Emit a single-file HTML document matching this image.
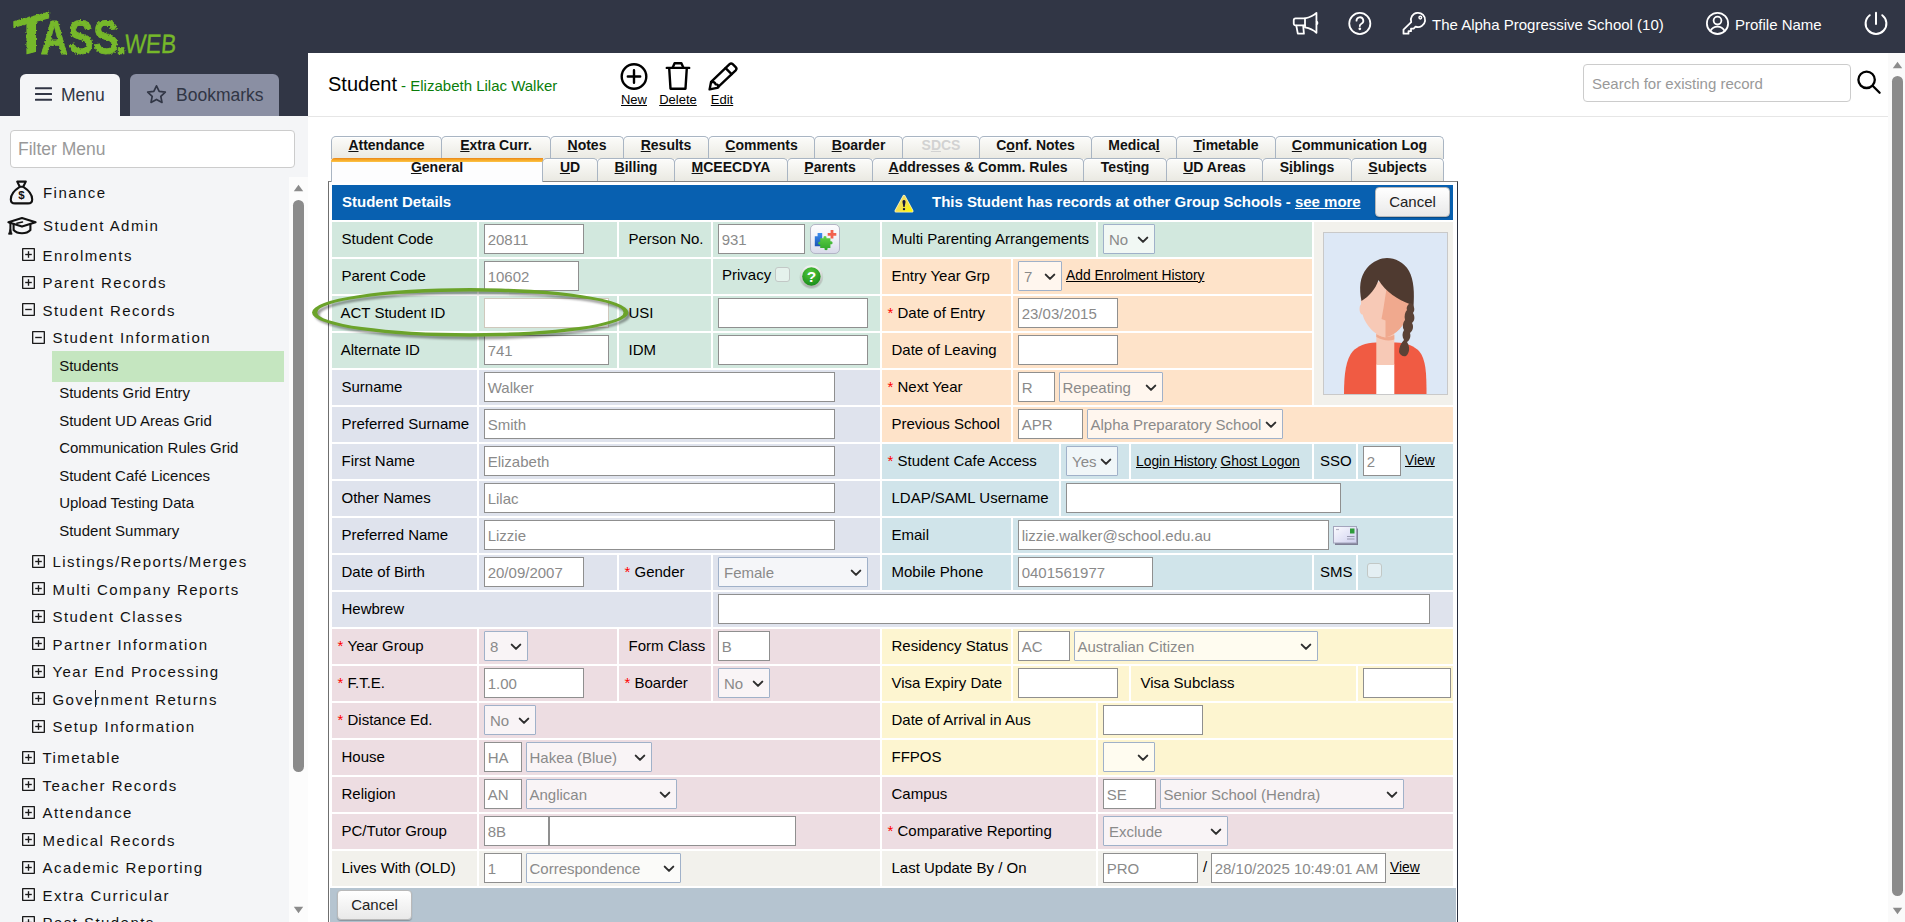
<!DOCTYPE html>
<html lang="en">
<head>
<meta charset="utf-8">
<title>TASS.web - Student</title>
<style>

*{box-sizing:border-box;margin:0;padding:0}
html,body{width:1905px;height:922px;overflow:hidden;background:#fff}
body{font-family:"Liberation Sans",Arial,sans-serif;font-size:15px;color:#000;position:relative}
.abs{position:absolute}
a{color:#000;text-decoration:underline}
/* top chrome */
#topbar{left:0;top:0;width:1905px;height:53px;background:#313645}
#sidehead{left:0;top:0;width:308px;height:116px;background:#313645}
#sidebar{left:0;top:116px;width:308px;height:806px;background:#f4f5f7}
.mtab{top:74px;height:42px;border-radius:6px 6px 0 0;font-size:17.5px;color:#313645}
#tabmenu{left:20px;width:100px;background:#f4f5f7}
#tabbook{left:130px;width:149px;background:#8a8fa3}
.mtab span{position:absolute;top:11px;line-height:20px;white-space:nowrap}
.toptxt{color:#fff;font-size:15px;white-space:nowrap;line-height:20px;top:15px}
#filter{left:10px;top:130px;width:285px;height:38px;background:#fff;border:1px solid #ccc;border-radius:4px;
  font-size:17.5px;color:#999;line-height:37px;padding-left:7px}
#sbtrack{left:289px;top:177px;width:19px;height:745px;background:#fcfcfc}
.thumb{background:#8b8b8b;border-radius:6px}
.mi{position:absolute;white-space:nowrap;line-height:18px;height:18px;font-size:15px;color:#111}
.mg{letter-spacing:1.45px}
#sel{left:52px;top:351px;width:232px;height:31px;background:#c5e6c0}
/* page head */
#ptitle{left:328px;top:71px;font-size:20px;line-height:26px;white-space:nowrap}
#ptitle span{font-size:15px;color:#0a7d0a}
#hr{left:308px;top:116px;width:1580px;height:1px;background:#e6e6e6}
.tb{position:absolute;top:92px;font-size:13px;line-height:16px;text-align:center;text-decoration:underline;white-space:nowrap}
#search{left:1583px;top:64px;width:268px;height:38px;border:1px solid #ccc;border-radius:4px;background:#fff;
  font-size:15px;color:#999;line-height:37px;padding-left:8px}
#vtrack{left:1888px;top:53px;width:17px;height:869px;background:#fafafa}
/* tabs */
.tab{position:absolute;height:23px;border:1px solid #a9b5c3;border-bottom:none;border-radius:5px 5px 0 0;
  background:linear-gradient(#fcfcfa,#eae9e2);font-weight:bold;font-size:14px;line-height:17.5px;text-align:center;white-space:nowrap;color:#111;
  box-shadow:inset 0 1px 0 #fff}
.tab u{text-decoration:underline}
.tab.dis{color:#d2d2d2}
.tab.act{background:#fdfdfe;border-top:none;height:24px;line-height:15.5px;padding-top:2px;box-shadow:none}
.tab.act:before{content:"";position:absolute;left:-1px;right:-1px;top:0;height:4px;border-radius:5px 0 0 0;background:linear-gradient(#e8861d,#f6a623 45%,#fcc44a)}
/* panel */
#panel{left:328px;top:181px;width:1130px;height:741px;border-left:1px solid #6f6f6f;border-top:1px solid #858585;border-right:1px solid #2a3040;background:#fff}
#phead{left:332px;top:185px;width:1121px;height:35px;background:#0860b0;color:#fff;font-weight:bold;font-size:15px;line-height:33px}
#pfoot{left:330px;top:888px;width:1126px;height:34px;background:#b5c4d0}
.btn{position:absolute;height:30px;border:1px solid #b9b9b9;border-radius:4px;background:linear-gradient(#ffffff,#e9e9e9);
  font-size:15px;line-height:28px;text-align:center;color:#222;box-shadow:0 1px 1px rgba(0,0,0,.25)}
.c{position:absolute;height:35px;line-height:35px;white-space:nowrap;font-size:15px}
.c .l{position:absolute;left:9.5px;top:-1.5px}
.c .r{position:absolute;left:5.5px;top:-1.5px}
.c .r i{color:#f00;font-style:normal;display:inline-block;width:10px}
.in{position:absolute;top:2px;height:30px;border:1px solid #8f8f8f;background:#fff;color:#8a8a8a;font-size:15px;line-height:29px;padding-left:2.7px;overflow:hidden;white-space:nowrap}
.se{position:absolute;top:2px;height:30px;border:1px solid #a0b1c9;border-radius:1px;background:rgba(255,255,255,.68);color:#8a8a8a;font-size:15px;line-height:30px;padding-left:5px;overflow:hidden;white-space:nowrap}
.se svg{position:absolute;right:5px;top:11px}
.lk{position:absolute;top:0;font-size:13.85px;text-decoration:underline}
.cb{position:absolute;width:15px;height:15px;border:1px solid #c2c8c6;border-radius:3px;background:rgba(255,255,255,.42)}
.g{background:#d2e8de}.o{background:#fee3c9}.n{background:#dfe3ed}.t{background:#d0e4ea}.p{background:#eddde2}.y{background:#fdf5d0}.b{background:#f2f1ec}

</style>
</head>
<body>
<div id="topbar" class="abs"></div><div id="sidehead" class="abs"></div>
<svg class="abs" style="left:0;top:0" width="190" height="64" viewBox="0 0 190 64"><defs><filter id="rough" x="-5%" y="-10%" width="110%" height="120%"><feTurbulence type="fractalNoise" baseFrequency="0.5" numOctaves="2" seed="7" result="n"/><feDisplacementMap in="SourceGraphic" in2="n" scale="3" xChannelSelector="R" yChannelSelector="G"/></filter></defs><g fill="#76b82a" stroke="#76b82a" stroke-linejoin="round" font-family="'Liberation Sans',Arial,sans-serif" filter="url(#rough)"><text x="13.200" y="53" font-size="52" font-weight="bold" stroke-width="1" textLength="36" lengthAdjust="spacingAndGlyphs" transform="translate(30 0) skewY(-15) translate(-30 0)">T</text><text x="40.500" y="54.200" font-size="49" font-weight="bold" stroke-width=".8" textLength="78" lengthAdjust="spacingAndGlyphs">ASS</text><text x="115.300" y="54" font-size="42" font-weight="bold" stroke-width=".6">.</text></g><text x="124" y="53.300" font-size="26.500" fill="#76b82a" stroke="#76b82a" stroke-width=".35" font-family="'Liberation Sans',Arial,sans-serif" textLength="51.500" lengthAdjust="spacingAndGlyphs" transform="translate(125 53) skewX(-5) translate(-125 -53)">WEB</text></svg>
<div id="tabmenu" class="abs mtab"><span style="left:41px">Menu</span></div>
<svg class="abs" style="left:35px;top:86px" width="17" height="16" viewBox="0 0 17 16" fill="none" ><path d="M0.8 2.2h15.400M0.8 8h15.400M0.8 13.800h15.400" stroke="#313645" stroke-width="2" stroke-linecap="round"/></svg>
<div id="tabbook" class="abs mtab"><span style="left:46px">Bookmarks</span></div>
<svg class="abs" style="left:146px;top:84px" width="21" height="20" viewBox="0 0 21 20" fill="none" ><path d="M10.5 1.800l2.700 5.600 6.100.8-4.500 4.200 1.200 6-5.500-3-5.500 3 1.200-6L1.700 8.200l6.100-.8z" stroke="#313645" stroke-width="1.7" stroke-linejoin="round"/></svg>
<svg class="abs" style="left:1291px;top:10px" width="30" height="28" viewBox="0 0 30 28" fill="none" ><g stroke="#fff" stroke-width="1.800" stroke-linecap="round" stroke-linejoin="round"><path d="M14 8.450H4.600a1.850 1.850 0 0 0-1.850 1.850v3.300a1.850 1.850 0 0 0 1.850 1.850H14"/><path d="M14 8.450c4.600-.9 8.600-2.800 11.450-5.500v19.900c-2.850-2.700-6.850-4.600-11.450-5.400z"/><path d="M5.300 15.600l1.500 8.050h6.100l-.7-8.050"/><path d="M25.600 11.600c1.300.3 1.300 2.300 0 2.600" stroke-width="1.600"/></g></svg><svg class="abs" style="left:1347px;top:10px" width="27" height="27" viewBox="0 0 27 27" fill="none" ><g stroke="#fff" stroke-width="1.800" stroke-linecap="round" stroke-linejoin="round"><circle cx="12.800" cy="13.500" r="10.550"/><path d="M9.500 10.700a3.400 3.400 0 1 1 4.900 3c-1.100.6-1.600 1.200-1.600 2.300"/></g><circle cx="12.800" cy="18.800" r="1.350" fill="#fff"/></svg><svg class="abs" style="left:1400px;top:9px" width="30" height="30" viewBox="0 0 30 30" fill="none" ><g stroke="#fff" stroke-width="1.800" stroke-linecap="round" stroke-linejoin="round"><path d="M11.200 13.200A7.150 7.150 0 1 1 15.600 17.700L13.600 19.700H11V22.200H8.500V24.700H3.500V20.600Z"/><circle cx="20.300" cy="8.600" r="1.300" stroke-width="1.500"/></g></svg><svg class="abs" style="left:1704px;top:10px" width="28" height="28" viewBox="0 0 28 28" fill="none" ><g stroke="#fff" stroke-width="1.800" stroke-linecap="round" stroke-linejoin="round"><circle cx="13.500" cy="13.400" r="10.600"/><circle cx="13.500" cy="10.600" r="3.900"/><path d="M6.300 21c1.600-3 4.200-4.400 7.200-4.400s5.600 1.400 7.200 4.400"/></g></svg><svg class="abs" style="left:1862px;top:9px" width="28" height="28" viewBox="0 0 28 28" fill="none" ><g stroke="#fff" stroke-width="1.800" stroke-linecap="round" stroke-linejoin="round"><path stroke-width="2" d="M14 3.700v11.300"/><path stroke-width="2" d="M7.740 6.200A10.400 10.400 0 1 0 20.260 6.200"/></g></svg>
<div class="abs toptxt" style="left:1432px">The Alpha Progressive School (10)</div>
<div class="abs toptxt" style="left:1735px">Profile Name</div>
<div id="sidebar" class="abs"></div><div id="filter" class="abs">Filter Menu</div><div id="sbtrack" class="abs"></div><svg class="abs" style="left:293px;top:184px" width="11" height="8" viewBox="0 0 11 8"><path d="M0.8 7.2L5.5 0.8l4.7 6.4z" fill="#8b8b8b"/></svg><div class="abs thumb" style="left:293px;top:200px;width:11px;height:572px"></div><svg class="abs" style="left:293px;top:906px" width="11" height="8" viewBox="0 0 11 8"><path d="M0.8 0.8L5.5 7.2l4.7-6.4z" fill="#8b8b8b"/></svg><div id="sel" class="abs"></div><div class="mi mg" style="left:43px;top:183.5px">Finance</div><div class="mi mg" style="left:43px;top:216.5px">Student Admin</div><div class="mi mg" style="left:42.5px;top:246.5px">Enrolments</div><svg class="abs" style="left:22.0px;top:248.2px" width="13" height="13" viewBox="0 0 13 13" fill="none" stroke="#1a1a1a" stroke-width="1.350"><rect x=".65" y=".65" width="11.700" height="11.700" rx=".3"/><path d="M3.2 6.5h6.600"/><path d="M6.5 3.2v6.600"/></svg><div class="mi mg" style="left:42.5px;top:274.0px">Parent Records</div><svg class="abs" style="left:22.0px;top:275.7px" width="13" height="13" viewBox="0 0 13 13" fill="none" stroke="#1a1a1a" stroke-width="1.350"><rect x=".65" y=".65" width="11.700" height="11.700" rx=".3"/><path d="M3.2 6.5h6.600"/><path d="M6.5 3.2v6.600"/></svg><div class="mi mg" style="left:42.5px;top:301.5px">Student Records</div><svg class="abs" style="left:22.0px;top:303.2px" width="13" height="13" viewBox="0 0 13 13" fill="none" stroke="#1a1a1a" stroke-width="1.350"><rect x=".65" y=".65" width="11.700" height="11.700" rx=".3"/><path d="M3.2 6.5h6.600"/></svg><div class="mi mg" style="left:52.5px;top:329.0px">Student Information</div><svg class="abs" style="left:32.0px;top:330.7px" width="13" height="13" viewBox="0 0 13 13" fill="none" stroke="#1a1a1a" stroke-width="1.350"><rect x=".65" y=".65" width="11.700" height="11.700" rx=".3"/><path d="M3.2 6.5h6.600"/></svg><div class="mi" style="left:59.2px;top:357.0px">Students</div><div class="mi" style="left:59.2px;top:384.0px">Students Grid Entry</div><div class="mi" style="left:59.2px;top:412.0px">Student UD Areas Grid</div><div class="mi" style="left:59.2px;top:439.0px">Communication Rules Grid</div><div class="mi" style="left:59.2px;top:467.0px">Student Café Licences</div><div class="mi" style="left:59.2px;top:494.0px">Upload Testing Data</div><div class="mi" style="left:59.2px;top:522.0px">Student Summary</div><div class="mi mg" style="left:52.5px;top:553.0px">Listings/Reports/Merges</div><svg class="abs" style="left:32.0px;top:554.7px" width="13" height="13" viewBox="0 0 13 13" fill="none" stroke="#1a1a1a" stroke-width="1.350"><rect x=".65" y=".65" width="11.700" height="11.700" rx=".3"/><path d="M3.2 6.5h6.600"/><path d="M6.5 3.2v6.600"/></svg><div class="mi mg" style="left:52.5px;top:580.5px">Multi Company Reports</div><svg class="abs" style="left:32.0px;top:582.2px" width="13" height="13" viewBox="0 0 13 13" fill="none" stroke="#1a1a1a" stroke-width="1.350"><rect x=".65" y=".65" width="11.700" height="11.700" rx=".3"/><path d="M3.2 6.5h6.600"/><path d="M6.5 3.2v6.600"/></svg><div class="mi mg" style="left:52.5px;top:608.0px">Student Classes</div><svg class="abs" style="left:32.0px;top:609.7px" width="13" height="13" viewBox="0 0 13 13" fill="none" stroke="#1a1a1a" stroke-width="1.350"><rect x=".65" y=".65" width="11.700" height="11.700" rx=".3"/><path d="M3.2 6.5h6.600"/><path d="M6.5 3.2v6.600"/></svg><div class="mi mg" style="left:52.5px;top:635.5px">Partner Information</div><svg class="abs" style="left:32.0px;top:637.2px" width="13" height="13" viewBox="0 0 13 13" fill="none" stroke="#1a1a1a" stroke-width="1.350"><rect x=".65" y=".65" width="11.700" height="11.700" rx=".3"/><path d="M3.2 6.5h6.600"/><path d="M6.5 3.2v6.600"/></svg><div class="mi mg" style="left:52.5px;top:663.0px">Year End Processing</div><svg class="abs" style="left:32.0px;top:664.7px" width="13" height="13" viewBox="0 0 13 13" fill="none" stroke="#1a1a1a" stroke-width="1.350"><rect x=".65" y=".65" width="11.700" height="11.700" rx=".3"/><path d="M3.2 6.5h6.600"/><path d="M6.5 3.2v6.600"/></svg><div class="mi mg" style="left:52.5px;top:690.5px">Government Returns</div><svg class="abs" style="left:32.0px;top:692.2px" width="13" height="13" viewBox="0 0 13 13" fill="none" stroke="#1a1a1a" stroke-width="1.350"><rect x=".65" y=".65" width="11.700" height="11.700" rx=".3"/><path d="M3.2 6.5h6.600"/><path d="M6.5 3.2v6.600"/></svg><div class="mi mg" style="left:52.5px;top:718.0px">Setup Information</div><svg class="abs" style="left:32.0px;top:719.7px" width="13" height="13" viewBox="0 0 13 13" fill="none" stroke="#1a1a1a" stroke-width="1.350"><rect x=".65" y=".65" width="11.700" height="11.700" rx=".3"/><path d="M3.2 6.5h6.600"/><path d="M6.5 3.2v6.600"/></svg><div class="mi mg" style="left:42.5px;top:749.0px">Timetable</div><svg class="abs" style="left:22.0px;top:750.7px" width="13" height="13" viewBox="0 0 13 13" fill="none" stroke="#1a1a1a" stroke-width="1.350"><rect x=".65" y=".65" width="11.700" height="11.700" rx=".3"/><path d="M3.2 6.5h6.600"/><path d="M6.5 3.2v6.600"/></svg><div class="mi mg" style="left:42.5px;top:776.5px">Teacher Records</div><svg class="abs" style="left:22.0px;top:778.2px" width="13" height="13" viewBox="0 0 13 13" fill="none" stroke="#1a1a1a" stroke-width="1.350"><rect x=".65" y=".65" width="11.700" height="11.700" rx=".3"/><path d="M3.2 6.5h6.600"/><path d="M6.5 3.2v6.600"/></svg><div class="mi mg" style="left:42.5px;top:804.0px">Attendance</div><svg class="abs" style="left:22.0px;top:805.7px" width="13" height="13" viewBox="0 0 13 13" fill="none" stroke="#1a1a1a" stroke-width="1.350"><rect x=".65" y=".65" width="11.700" height="11.700" rx=".3"/><path d="M3.2 6.5h6.600"/><path d="M6.5 3.2v6.600"/></svg><div class="mi mg" style="left:42.5px;top:831.5px">Medical Records</div><svg class="abs" style="left:22.0px;top:833.2px" width="13" height="13" viewBox="0 0 13 13" fill="none" stroke="#1a1a1a" stroke-width="1.350"><rect x=".65" y=".65" width="11.700" height="11.700" rx=".3"/><path d="M3.2 6.5h6.600"/><path d="M6.5 3.2v6.600"/></svg><div class="mi mg" style="left:42.5px;top:859.0px">Academic Reporting</div><svg class="abs" style="left:22.0px;top:860.7px" width="13" height="13" viewBox="0 0 13 13" fill="none" stroke="#1a1a1a" stroke-width="1.350"><rect x=".65" y=".65" width="11.700" height="11.700" rx=".3"/><path d="M3.2 6.5h6.600"/><path d="M6.5 3.2v6.600"/></svg><div class="mi mg" style="left:42.5px;top:886.5px">Extra Curricular</div><svg class="abs" style="left:22.0px;top:888.2px" width="13" height="13" viewBox="0 0 13 13" fill="none" stroke="#1a1a1a" stroke-width="1.350"><rect x=".65" y=".65" width="11.700" height="11.700" rx=".3"/><path d="M3.2 6.5h6.600"/><path d="M6.5 3.2v6.600"/></svg><div class="mi mg" style="left:42.5px;top:914.0px">Past Students</div><svg class="abs" style="left:22.0px;top:915.7px" width="13" height="13" viewBox="0 0 13 13" fill="none" stroke="#1a1a1a" stroke-width="1.350"><rect x=".65" y=".65" width="11.700" height="11.700" rx=".3"/><path d="M3.2 6.5h6.600"/><path d="M6.5 3.2v6.600"/></svg><svg class="abs" style="left:8px;top:179px" width="28" height="27" viewBox="0 0 28 27" fill="none" ><g stroke="#111" stroke-width="2.100" stroke-linecap="round" stroke-linejoin="round"><path d="M9.2 2.6h8.6l-2.6 5.2h-3.4z"/><path d="M11.4 8.2C6 11.6 2.8 16.6 2.8 20.4c0 2.6 1.6 4 4.2 4h13c2.6 0 4.2-1.4 4.2-4 0-3.8-3.200-8.800-8.600-12.200"/></g><text x="13.500" y="19.800" font-size="11.500" font-weight="bold" text-anchor="middle" fill="#111" font-family="'Liberation Sans',sans-serif">$</text></svg><svg class="abs" style="left:6px;top:214px" width="32" height="22" viewBox="0 0 32 22" fill="none" ><g stroke="#111" stroke-width="2.100" stroke-linecap="round" stroke-linejoin="round"><path d="M2.400 8.300L16 4.100l13.600 4.200L16 12.600z"/><path d="M7.600 10.600v5.400c2 2.200 5 3.200 8.400 3.200s6.400-1 8.400-3.200v-5.400"/><path d="M16.500 8.100l-5.600 1.200" stroke-width="1.500"/><path d="M4.400 9.200v7" stroke-width="2"/></g><path d="M4.400 14.500l1.700 5.700H2.500z" fill="#111" stroke="#111" stroke-width=".8" stroke-linejoin="round"/></svg><div class="abs" style="left:95px;top:690px;width:1px;height:17px;background:#222"></div>
<div id="ptitle" class="abs">Student<span> - Elizabeth Lilac Walker</span></div>
<svg class="abs" style="left:618px;top:61px" width="32" height="32" viewBox="0 0 32 32" fill="none" ><g stroke="#000" stroke-width="2.4" stroke-linecap="round" stroke-linejoin="round"><circle cx="16" cy="15.5" r="12.3"/><path d="M16 9.3v12.4M9.8 15.5h12.4"/></g></svg><div class="tb" style="left:614px;width:40px">New</div><svg class="abs" style="left:662px;top:60px" width="32" height="32" viewBox="0 0 32 32" fill="none" ><g stroke="#000" stroke-width="2.4" stroke-linecap="round" stroke-linejoin="round"><path d="M4.800 7.900h22.400"/><path d="M7.200 8.100l1.300 20.600h15l1.300-20.600"/><path d="M10.600 7.700l2-4.400h6.800l2 4.400"/></g></svg><div class="tb" style="left:655px;width:46px">Delete</div><svg class="abs" style="left:705px;top:60px" width="34" height="32" viewBox="0 0 34 32" fill="none" ><g stroke="#000" stroke-width="2.4" stroke-linecap="round" stroke-linejoin="round"><path d="M4.6 29.4l1.5-7.6L24.6 4.2a2.2 2.2 0 0 1 3.1 0l3 3a2.2 2.2 0 0 1 0 3.1L12.2 27.9z"/><path d="M20.6 8.2l6 6"/><path d="M6.3 22.2c2.4-.6 4 .2 4.3 2.2 2-.2 3 .8 2.6 3"/></g></svg><div class="tb" style="left:702px;width:40px">Edit</div>
<div id="search" class="abs">Search for existing record</div>
<svg class="abs" style="left:1856px;top:69px" width="26" height="26" viewBox="0 0 26 26" fill="none" ><g stroke="#000" stroke-width="2.3" stroke-linecap="round"><circle cx="10.6" cy="10.800" r="8.200"/><path d="M16.600 16.800l7 7"/></g></svg>
<div id="hr" class="abs"></div>
<div id="vtrack" class="abs"></div>
<svg class="abs" style="left:1892px;top:61px" width="11" height="8" viewBox="0 0 11 8"><path d="M0.8 7.2L5.5 0.8l4.7 6.400z" fill="#8b8b8b"/></svg>
<div class="abs thumb" style="left:1892px;top:76px;width:11px;height:820px"></div>
<svg class="abs" style="left:1892px;top:907px" width="11" height="8" viewBox="0 0 11 8"><path d="M0.8 0.8L5.5 7.2l4.700-6.400z" fill="#8b8b8b"/></svg>
<div id="panel" class="abs"></div>
<div id="phead" class="abs"><span class="abs" style="left:10px">Student Details</span><svg class="abs" style="left:561px;top:8px" width="22" height="22" viewBox="0 0 22 22"><defs><linearGradient id="wg" x1="0" y1="0" x2="1" y2="1"><stop offset="0" stop-color="#f1de7a"/><stop offset=".55" stop-color="#f4e04a"/><stop offset="1" stop-color="#fffb00"/></linearGradient></defs><path d="M11 3.400L18.900 18H3.100z" fill="#f6eeb8" stroke="#f6eeb8" stroke-width="3.200" stroke-linejoin="round"/><path d="M11 3.600L18.700 17.900H3.300z" fill="url(#wg)" stroke="url(#wg)" stroke-width="1.800" stroke-linejoin="round"/><path d="M11 6.900c1.300 0 1.700 1 1.450 2.500l-.85 4.500h-1.200l-.85-4.500c-.25-1.500.15-2.500 1.450-2.500z" fill="#15153a"/><circle cx="11" cy="16.100" r="1.200" fill="#15153a"/></svg><span class="abs" style="left:600px;white-space:nowrap;letter-spacing:-.025px">This Student has records at other Group Schools - <u>see more</u></span><span class="btn" style="left:1043px;top:2px;width:75px;font-weight:normal">Cancel</span></div>
<div class="c g" style="left:332px;top:222px;width:145px;height:35px"><span class="l" style="left:9.5px">Student Code</span></div>
<div class="c g" style="left:479px;top:222px;width:138px;height:35px"><span class="in" style="left:5px;width:100px;">20811</span></div>
<div class="c g" style="left:619px;top:222px;width:92px;height:35px"><span class="l" style="left:9.5px">Person No.</span></div>
<div class="c g" style="left:713px;top:222px;width:167px;height:35px"><span class="in" style="left:5px;width:87px;">931</span><span class="abs" style="left:97px;top:2px;width:30px;height:30px;border:1px solid #b3b5c6;border-radius:5px;background:linear-gradient(#fdfdfe,#f1f2f8 45%,#d9dbea)"><svg class="abs" style="left:-1px;top:-1px" width="30" height="30" viewBox="0 0 30 30"><defs><linearGradient id="pb" x1="0" y1="0" x2="0" y2="1"><stop offset="0" stop-color="#3d8ef0"/><stop offset="1" stop-color="#1b55b5"/></linearGradient><linearGradient id="pg" x1="0" y1="0" x2="0" y2="1"><stop offset="0" stop-color="#5fd045"/><stop offset="1" stop-color="#2ea62b"/></linearGradient></defs><path d="M4.800 12.200h2.800V9h4.600v13.200H4.800z" fill="url(#pb)"/><path d="M10.200 14.200h3.400c-1.100-3 3.900-3 2.800 0h4v3.100c2.900-1.100 2.900 4 0 2.900v3.900h-2.900c1 3-3.900 3-2.900 0h-4.400v-3.500c-2.600 1-2.600-3.600 0-2.600z" fill="url(#pg)"/><path d="M20.600 6h2.800v2.900h2.900v2.800h-2.900v2.900h-2.800v-2.900h-2.900V8.900h2.900z" fill="#f2604e"/></svg></span></div>
<div class="c g" style="left:332px;top:259px;width:145px;height:35px"><span class="l" style="left:9.5px">Parent Code</span></div>
<div class="c g" style="left:479px;top:259px;width:232px;height:35px"><span class="in" style="left:5px;width:95px;">10602</span></div>
<div class="c g" style="left:713px;top:259px;width:167px;height:35px"><span class="l" style="left:9px;top:-2.500px">Privacy</span><span class="cb" style="left:62px;top:8px"></span><svg class="abs" style="left:85px;top:4px" width="27" height="28" viewBox="0 0 27 28"><defs><radialGradient id="hg" cx=".45" cy=".3" r=".75"><stop offset="0" stop-color="#55c83c"/><stop offset="1" stop-color="#168a18"/></radialGradient><linearGradient id="hring" x1="0" y1="0" x2="0" y2="1"><stop offset="0" stop-color="#f4f6f5"/><stop offset="1" stop-color="#a9b0ac"/></linearGradient></defs><circle cx="13.400" cy="14.200" r="11.700" fill="#9aa8a0" opacity=".35"/><circle cx="13.400" cy="13.500" r="11.300" fill="url(#hring)"/><circle cx="13.400" cy="13.500" r="9.200" fill="url(#hg)"/><text x="13.400" y="19" text-anchor="middle" font-family="'Liberation Sans',sans-serif" font-weight="bold" font-size="15.500" fill="#fff">?</text></svg></div>
<div class="c g" style="left:332px;top:296px;width:145px;height:35px"><span class="l" style="left:8.5px">ACT Student ID</span></div>
<div class="c g" style="left:479px;top:296px;width:138px;height:35px"><span class="in" style="left:5px;width:125px;border-color:#cfc8bc"></span></div>
<div class="c g" style="left:619px;top:296px;width:92px;height:35px"><span class="l" style="left:9.5px">USI</span></div>
<div class="c g" style="left:713px;top:296px;width:167px;height:35px"><span class="in" style="left:5px;width:150px;"></span></div>
<div class="c g" style="left:332px;top:333px;width:145px;height:35px"><span class="l" style="left:8.7px">Alternate ID</span></div>
<div class="c g" style="left:479px;top:333px;width:138px;height:35px"><span class="in" style="left:5px;width:125px;">741</span></div>
<div class="c g" style="left:619px;top:333px;width:92px;height:35px"><span class="l" style="left:9.5px">IDM</span></div>
<div class="c g" style="left:713px;top:333px;width:167px;height:35px"><span class="in" style="left:5px;width:150px;"></span></div>
<div class="c n" style="left:332px;top:370px;width:145px;height:35px"><span class="l" style="left:9.5px">Surname</span></div>
<div class="c n" style="left:479px;top:370px;width:401px;height:35px"><span class="in" style="left:5px;width:351px;">Walker</span></div>
<div class="c n" style="left:332px;top:407px;width:145px;height:35px"><span class="l" style="left:9.5px">Preferred Surname</span></div>
<div class="c n" style="left:479px;top:407px;width:401px;height:35px"><span class="in" style="left:5px;width:351px;">Smith</span></div>
<div class="c n" style="left:332px;top:444px;width:145px;height:35px"><span class="l" style="left:9.5px">First Name</span></div>
<div class="c n" style="left:479px;top:444px;width:401px;height:35px"><span class="in" style="left:5px;width:351px;">Elizabeth</span></div>
<div class="c n" style="left:332px;top:481px;width:145px;height:35px"><span class="l" style="left:9.5px">Other Names</span></div>
<div class="c n" style="left:479px;top:481px;width:401px;height:35px"><span class="in" style="left:5px;width:351px;">Lilac</span></div>
<div class="c n" style="left:332px;top:518px;width:145px;height:35px"><span class="l" style="left:9.5px">Preferred Name</span></div>
<div class="c n" style="left:479px;top:518px;width:401px;height:35px"><span class="in" style="left:5px;width:351px;">Lizzie</span></div>
<div class="c n" style="left:332px;top:555px;width:145px;height:35px"><span class="l" style="left:9.5px">Date of Birth</span></div>
<div class="c n" style="left:479px;top:555px;width:138px;height:35px"><span class="in" style="left:5px;width:100px;">20/09/2007</span></div>
<div class="c n" style="left:619px;top:555px;width:92px;height:35px"><span class="r"><i>*</i>Gender</span></div>
<div class="c n" style="left:713px;top:555px;width:167px;height:35px"><span class="se" style="left:5px;width:150px;padding-left:5px">Female<svg width="12" height="8" viewBox="0 0 12 8" fill="none"><path d="M1.700 1.600L6 5.900l4.300-4.300" stroke="#2e2e2e" stroke-width="2" stroke-linecap="round" stroke-linejoin="round"/></svg></span></div>
<div class="c n" style="left:332px;top:592px;width:379px;height:35px"><span class="l" style="left:9.5px">Hewbrew</span></div>
<div class="c n" style="left:713px;top:592px;width:740px;height:35px"><span class="in" style="left:5px;width:712px;"></span></div>
<div class="c p" style="left:332px;top:629px;width:145px;height:35px"><span class="r"><i>*</i>Year Group</span></div>
<div class="c p" style="left:479px;top:629px;width:138px;height:35px"><span class="se" style="left:5px;width:44px;padding-left:5px">8<svg width="12" height="8" viewBox="0 0 12 8" fill="none"><path d="M1.700 1.600L6 5.900l4.300-4.300" stroke="#2e2e2e" stroke-width="2" stroke-linecap="round" stroke-linejoin="round"/></svg></span></div>
<div class="c p" style="left:619px;top:629px;width:92px;height:35px"><span class="l" style="left:9.5px">Form Class</span></div>
<div class="c p" style="left:713px;top:629px;width:167px;height:35px"><span class="in" style="left:5px;width:52px;">B</span></div>
<div class="c p" style="left:332px;top:666px;width:145px;height:35px"><span class="r"><i>*</i>F.T.E.</span></div>
<div class="c p" style="left:479px;top:666px;width:138px;height:35px"><span class="in" style="left:5px;width:100px;">1.00</span></div>
<div class="c p" style="left:619px;top:666px;width:92px;height:35px"><span class="r"><i>*</i>Boarder</span></div>
<div class="c p" style="left:713px;top:666px;width:167px;height:35px"><span class="se" style="left:5px;width:52px;padding-left:5px">No<svg width="12" height="8" viewBox="0 0 12 8" fill="none"><path d="M1.700 1.600L6 5.900l4.300-4.300" stroke="#2e2e2e" stroke-width="2" stroke-linecap="round" stroke-linejoin="round"/></svg></span></div>
<div class="c p" style="left:332px;top:703px;width:145px;height:35px"><span class="r"><i>*</i>Distance Ed.</span></div>
<div class="c p" style="left:479px;top:703px;width:401px;height:35px"><span class="se" style="left:5px;width:52px;padding-left:5px">No<svg width="12" height="8" viewBox="0 0 12 8" fill="none"><path d="M1.700 1.600L6 5.900l4.300-4.300" stroke="#2e2e2e" stroke-width="2" stroke-linecap="round" stroke-linejoin="round"/></svg></span></div>
<div class="c p" style="left:332px;top:740px;width:145px;height:35px"><span class="l" style="left:9.5px">House</span></div>
<div class="c p" style="left:479px;top:740px;width:401px;height:35px"><span class="in" style="left:5px;width:38px;">HA</span><span class="se" style="left:47px;width:126px;padding-left:2.5px">Hakea (Blue)<svg width="12" height="8" viewBox="0 0 12 8" fill="none"><path d="M1.700 1.600L6 5.900l4.300-4.300" stroke="#2e2e2e" stroke-width="2" stroke-linecap="round" stroke-linejoin="round"/></svg></span></div>
<div class="c p" style="left:332px;top:777px;width:145px;height:35px"><span class="l" style="left:9.5px">Religion</span></div>
<div class="c p" style="left:479px;top:777px;width:401px;height:35px"><span class="in" style="left:5px;width:38px;">AN</span><span class="se" style="left:47px;width:151px;padding-left:2.5px">Anglican<svg width="12" height="8" viewBox="0 0 12 8" fill="none"><path d="M1.700 1.600L6 5.900l4.300-4.300" stroke="#2e2e2e" stroke-width="2" stroke-linecap="round" stroke-linejoin="round"/></svg></span></div>
<div class="c p" style="left:332px;top:814px;width:145px;height:35px"><span class="l" style="left:9.5px">PC/Tutor Group</span></div>
<div class="c p" style="left:479px;top:814px;width:401px;height:35px"><span class="in" style="left:5px;width:65px;">8B</span><span class="in" style="left:70px;width:247px;"></span></div>
<div class="c b" style="left:332px;top:851px;width:145px;height:35px"><span class="l" style="left:9.5px">Lives With (OLD)</span></div>
<div class="c b" style="left:479px;top:851px;width:401px;height:35px"><span class="in" style="left:5px;width:38px;">1</span><span class="se" style="left:47px;width:155px;padding-left:2.5px">Correspondence<svg width="12" height="8" viewBox="0 0 12 8" fill="none"><path d="M1.700 1.600L6 5.900l4.300-4.300" stroke="#2e2e2e" stroke-width="2" stroke-linecap="round" stroke-linejoin="round"/></svg></span></div>
<div class="c g" style="left:882px;top:222px;width:214px;height:35px"><span class="l" style="left:9.5px">Multi Parenting Arrangements</span></div>
<div class="c g" style="left:1098px;top:222px;width:214px;height:35px"><span class="se" style="left:5px;width:52px;padding-left:5px">No<svg width="12" height="8" viewBox="0 0 12 8" fill="none"><path d="M1.700 1.600L6 5.900l4.300-4.300" stroke="#2e2e2e" stroke-width="2" stroke-linecap="round" stroke-linejoin="round"/></svg></span></div>
<div class="c b" style="left:1314px;top:222px;width:139px;height:183px"><svg class="abs" style="left:9px;top:10px" width="125" height="163" viewBox="1323 232 125 163"><rect x="1323" y="232" width="125" height="163" fill="#dde8f6"/><path d="M1344 395c0-22 2-36 9-44 5-5 12-8 23-8.500h20c11 .5 18 3.500 23 8.500 7 8 7.500 22 7.500 44z" fill="#f05b43"/><rect x="1376.300" y="364.500" width="18" height="31" fill="#fff"/><path d="M1376.300 330h18v35h-18z" fill="#f7c9b6"/><path d="M1376.300 334c5 3.500 12 4 18 1v4.500c-6 2-12 .5-18-2.500z" fill="#f0a98e"/><path d="M1361 292c0 0-1 14 2 24 3 9 11 19 22 21.500 11-2.500 19-12.500 22-21.500 3-10 2-24 2-24l-24-14z" fill="#f7c9b6"/><path d="M1385.500 337.500c11-2.500 19-12.500 22-21.500 3-10 2-24 2-24l-22-10-4 26-2 11 4 1.500z" fill="#f0a98e"/><ellipse cx="1362.500" cy="309" rx="3" ry="5.500" fill="#f7c9b6"/><path d="M1361.500 301c-2.500-13-2-24 5.500-33 6-7 14-10 20-10 8 0 17 4 22 13 5 9 5.500 22 4.500 36l-4-3c-11-4-24-12-31-24-3 9-9 16-17 21z" fill="#4f3a30"/><path d="M1411 303c4 3 4 8 2 10 2 3 2 8-1 10 2 3 1 8-2 10 1 3 0 7-3 9 3 4 3 11-1 14-3 1-6-1-7-4 0-5 2-9 5-12-2-3-2-7 0-10-2-3-1-8 1-10-1-4 0-8 2-10-1-3 1-6 4-7z" fill="#5a4236"/><rect x="1323.500" y="232.500" width="124" height="162" fill="none" stroke="#c9c9c9"/></svg></div>
<div class="c o" style="left:882px;top:259px;width:129px;height:35px"><span class="l" style="left:9.5px">Entry Year Grp</span></div>
<div class="c o" style="left:1013px;top:259px;width:299px;height:35px"><span class="se" style="left:5px;width:44px;padding-left:5px">7<svg width="12" height="8" viewBox="0 0 12 8" fill="none"><path d="M1.700 1.600L6 5.900l4.300-4.300" stroke="#2e2e2e" stroke-width="2" stroke-linecap="round" stroke-linejoin="round"/></svg></span><a class="lk" style="left:53px;top:-1px">Add Enrolment History</a></div>
<div class="c o" style="left:882px;top:296px;width:129px;height:35px"><span class="r"><i>*</i>Date of Entry</span></div>
<div class="c o" style="left:1013px;top:296px;width:299px;height:35px"><span class="in" style="left:5px;width:100px;">23/03/2015</span></div>
<div class="c o" style="left:882px;top:333px;width:129px;height:35px"><span class="l" style="left:9.5px">Date of Leaving</span></div>
<div class="c o" style="left:1013px;top:333px;width:299px;height:35px"><span class="in" style="left:5px;width:100px;"></span></div>
<div class="c o" style="left:882px;top:370px;width:129px;height:35px"><span class="r"><i>*</i>Next Year</span></div>
<div class="c o" style="left:1013px;top:370px;width:299px;height:35px"><span class="in" style="left:5px;width:37px;">R</span><span class="se" style="left:46px;width:104px;padding-left:2.5px">Repeating<svg width="12" height="8" viewBox="0 0 12 8" fill="none"><path d="M1.700 1.600L6 5.900l4.300-4.300" stroke="#2e2e2e" stroke-width="2" stroke-linecap="round" stroke-linejoin="round"/></svg></span></div>
<div class="c o" style="left:882px;top:407px;width:129px;height:35px"><span class="l" style="left:9.5px">Previous School</span></div>
<div class="c o" style="left:1013px;top:407px;width:440px;height:35px"><span class="in" style="left:5px;width:65px;">APR</span><span class="se" style="left:74px;width:196px;padding-left:2.5px">Alpha Preparatory School<svg width="12" height="8" viewBox="0 0 12 8" fill="none"><path d="M1.700 1.600L6 5.900l4.300-4.300" stroke="#2e2e2e" stroke-width="2" stroke-linecap="round" stroke-linejoin="round"/></svg></span></div>
<div class="c t" style="left:882px;top:444px;width:177px;height:35px"><span class="r"><i>*</i>Student Cafe Access</span></div>
<div class="c t" style="left:1061px;top:444px;width:68px;height:35px"><span class="se" style="left:5px;width:52px;padding-left:5px">Yes<svg width="12" height="8" viewBox="0 0 12 8" fill="none"><path d="M1.700 1.600L6 5.900l4.300-4.300" stroke="#2e2e2e" stroke-width="2" stroke-linecap="round" stroke-linejoin="round"/></svg></span></div>
<div class="c t" style="left:1131px;top:444px;width:181px;height:35px"><a class="lk" style="left:5px;top:0px">Login History</a><a class="lk" style="left:89.5px;top:0px">Ghost Logon</a></div>
<div class="c t" style="left:1314px;top:444px;width:42px;height:35px"><span class="l" style="left:6px">SSO</span></div>
<div class="c t" style="left:1358px;top:444px;width:95px;height:35px"><span class="in" style="left:5px;width:38px;">2</span><a class="lk" style="left:47px;top:-1px">View</a></div>
<div class="c t" style="left:882px;top:481px;width:177px;height:35px"><span class="l" style="left:9.5px">LDAP/SAML Username</span></div>
<div class="c t" style="left:1061px;top:481px;width:392px;height:35px"><span class="in" style="left:5px;width:275px;"></span></div>
<div class="c t" style="left:882px;top:518px;width:129px;height:35px"><span class="l" style="left:9.5px">Email</span></div>
<div class="c t" style="left:1013px;top:518px;width:440px;height:35px"><span class="in" style="left:5px;width:311px;">lizzie.walker@school.edu.au</span><svg class="abs" style="left:320px;top:8px" width="25" height="19" viewBox="0 0 25 19"><defs><linearGradient id="mg" x1="0" y1="0" x2="1" y2="1"><stop offset="0" stop-color="#fbfbff"/><stop offset="1" stop-color="#cfd0ee"/></linearGradient></defs><rect x="2" y="2.500" width="23" height="16.500" fill="#7f8096"/><rect x="0.500" y="0.500" width="23" height="16.500" fill="url(#mg)" stroke="#a3a4bc"/><rect x="17" y="2.500" width="4.500" height="5" fill="#2e9b3a"/><path d="M14 10.500h7.500M14 13h7.500" stroke="#9a9ab0" stroke-width="1.200"/><path d="M3 3.500h3" stroke="#b5b5c5" stroke-width="1.200"/></svg></div>
<div class="c t" style="left:882px;top:555px;width:129px;height:35px"><span class="l" style="left:9.5px">Mobile Phone</span></div>
<div class="c t" style="left:1013px;top:555px;width:299px;height:35px"><span class="in" style="left:5px;width:135px;">0401561977</span></div>
<div class="c t" style="left:1314px;top:555px;width:42px;height:35px"><span class="l" style="left:6px">SMS</span></div>
<div class="c t" style="left:1358px;top:555px;width:95px;height:35px"><span class="cb" style="left:9px;top:8px"></span></div>
<div class="c y" style="left:882px;top:629px;width:129px;height:35px"><span class="l" style="left:9.5px">Residency Status</span></div>
<div class="c y" style="left:1013px;top:629px;width:440px;height:35px"><span class="in" style="left:5px;width:52px;">AC</span><span class="se" style="left:61px;width:244px;padding-left:2.5px">Australian Citizen<svg width="12" height="8" viewBox="0 0 12 8" fill="none"><path d="M1.700 1.600L6 5.900l4.300-4.300" stroke="#2e2e2e" stroke-width="2" stroke-linecap="round" stroke-linejoin="round"/></svg></span></div>
<div class="c y" style="left:882px;top:666px;width:129px;height:35px"><span class="l" style="left:9.5px">Visa Expiry Date</span></div>
<div class="c y" style="left:1013px;top:666px;width:116px;height:35px"><span class="in" style="left:5px;width:100px;"></span></div>
<div class="c y" style="left:1131px;top:666px;width:225px;height:35px"><span class="l" style="left:9.5px">Visa Subclass</span></div>
<div class="c y" style="left:1358px;top:666px;width:95px;height:35px"><span class="in" style="left:5px;width:88px;"></span></div>
<div class="c y" style="left:882px;top:703px;width:214px;height:35px"><span class="l" style="left:9.5px">Date of Arrival in Aus</span></div>
<div class="c y" style="left:1098px;top:703px;width:355px;height:35px"><span class="in" style="left:5px;width:100px;"></span></div>
<div class="c y" style="left:882px;top:740px;width:214px;height:35px"><span class="l" style="left:9.5px">FFPOS</span></div>
<div class="c y" style="left:1098px;top:740px;width:355px;height:35px"><span class="se" style="left:5px;width:52px;padding-left:5px"><svg width="12" height="8" viewBox="0 0 12 8" fill="none"><path d="M1.700 1.600L6 5.900l4.300-4.300" stroke="#2e2e2e" stroke-width="2" stroke-linecap="round" stroke-linejoin="round"/></svg></span></div>
<div class="c p" style="left:882px;top:777px;width:214px;height:35px"><span class="l" style="left:9.5px">Campus</span></div>
<div class="c p" style="left:1098px;top:777px;width:355px;height:35px"><span class="in" style="left:5px;width:53px;">SE</span><span class="se" style="left:62px;width:244px;padding-left:2.5px">Senior School (Hendra)<svg width="12" height="8" viewBox="0 0 12 8" fill="none"><path d="M1.700 1.600L6 5.900l4.300-4.300" stroke="#2e2e2e" stroke-width="2" stroke-linecap="round" stroke-linejoin="round"/></svg></span></div>
<div class="c p" style="left:882px;top:814px;width:214px;height:35px"><span class="r"><i>*</i>Comparative Reporting</span></div>
<div class="c p" style="left:1098px;top:814px;width:355px;height:35px"><span class="se" style="left:5px;width:125px;padding-left:5px">Exclude<svg width="12" height="8" viewBox="0 0 12 8" fill="none"><path d="M1.700 1.600L6 5.900l4.300-4.300" stroke="#2e2e2e" stroke-width="2" stroke-linecap="round" stroke-linejoin="round"/></svg></span></div>
<div class="c b" style="left:882px;top:851px;width:214px;height:35px"><span class="l" style="left:9.5px">Last Update By / On</span></div>
<div class="c b" style="left:1098px;top:851px;width:355px;height:35px"><span class="in" style="left:5px;width:95px;">PRO</span><span class="l" style="left:105px;top:-2.500px">/</span><span class="in" style="left:113px;width:175px;">28/10/2025 10:49:01 AM</span><a class="lk" style="left:292px;top:-1px">View</a></div>
<div id="pfoot" class="abs"><span class="btn" style="left:7px;top:2px;width:75px">Cancel</span></div>
<svg class="abs" style="left:300px;top:280px" width="345" height="70" viewBox="300 280 345 70"><defs><filter id="sh" x="-5%" y="-20%" width="112%" height="150%"><feGaussianBlur stdDeviation="1.300"/></filter></defs><path d="M312.0 312.4a158.2 24.4 0 1 0 316.4 0a158.2 24.4 0 1 0 -316.4 0zM317.2 312.4a153.2 20.8 0 1 0 306.4 0a153.2 20.8 0 1 0 -306.4 0z" fill="#000" fill-opacity=".4" fill-rule="evenodd" transform="translate(2.300 2.600)" filter="url(#sh)"/><path d="M312.0 312.4a158.2 24.4 0 1 0 316.4 0a158.2 24.4 0 1 0 -316.4 0zM317.2 312.4a153.2 20.8 0 1 0 306.4 0a153.2 20.8 0 1 0 -306.4 0z" fill="#6ba32a" fill-rule="evenodd"/></svg>
<div class="tab" style="left:331px;top:136px;width:111px"><u>A</u>ttendance</div><div class="tab" style="left:441px;top:136px;width:110px"><u>E</u>xtra Curr.</div><div class="tab" style="left:550px;top:136px;width:74px"><u>N</u>otes</div><div class="tab" style="left:623px;top:136px;width:86px"><u>R</u>esults</div><div class="tab" style="left:708px;top:136px;width:107px"><u>C</u>omments</div><div class="tab" style="left:814px;top:136px;width:89px"><u>B</u>oarder</div><div class="tab dis" style="left:902px;top:136px;width:78px">S<u>D</u>CS</div><div class="tab" style="left:979px;top:136px;width:113px">C<u>o</u>nf. Notes</div><div class="tab" style="left:1091px;top:136px;width:86px">Medica<u>l</u></div><div class="tab" style="left:1176px;top:136px;width:100px"><u>T</u>imetable</div><div class="tab" style="left:1275px;top:136px;width:169px"><u>C</u>ommunication Log</div><div class="tab act" style="left:331px;top:158px;width:212px"><u>G</u>eneral</div><div class="tab" style="left:542px;top:158px;width:56px"><u>U</u>D</div><div class="tab" style="left:597px;top:158px;width:78px"><u>B</u>illing</div><div class="tab" style="left:674px;top:158px;width:114px"><u>M</u>CEECDYA</div><div class="tab" style="left:787px;top:158px;width:86px"><u>P</u>arents</div><div class="tab" style="left:872px;top:158px;width:212px"><u>A</u>ddresses &amp; Comm. Rules</div><div class="tab" style="left:1083px;top:158px;width:84px">Test<u>i</u>ng</div><div class="tab" style="left:1166px;top:158px;width:97px"><u>U</u>D Areas</div><div class="tab" style="left:1262px;top:158px;width:90px">S<u>i</u>blings</div><div class="tab" style="left:1351px;top:158px;width:93px"><u>S</u>ubjects</div>
<div id="botline" class="abs"></div>
</body>
</html>
